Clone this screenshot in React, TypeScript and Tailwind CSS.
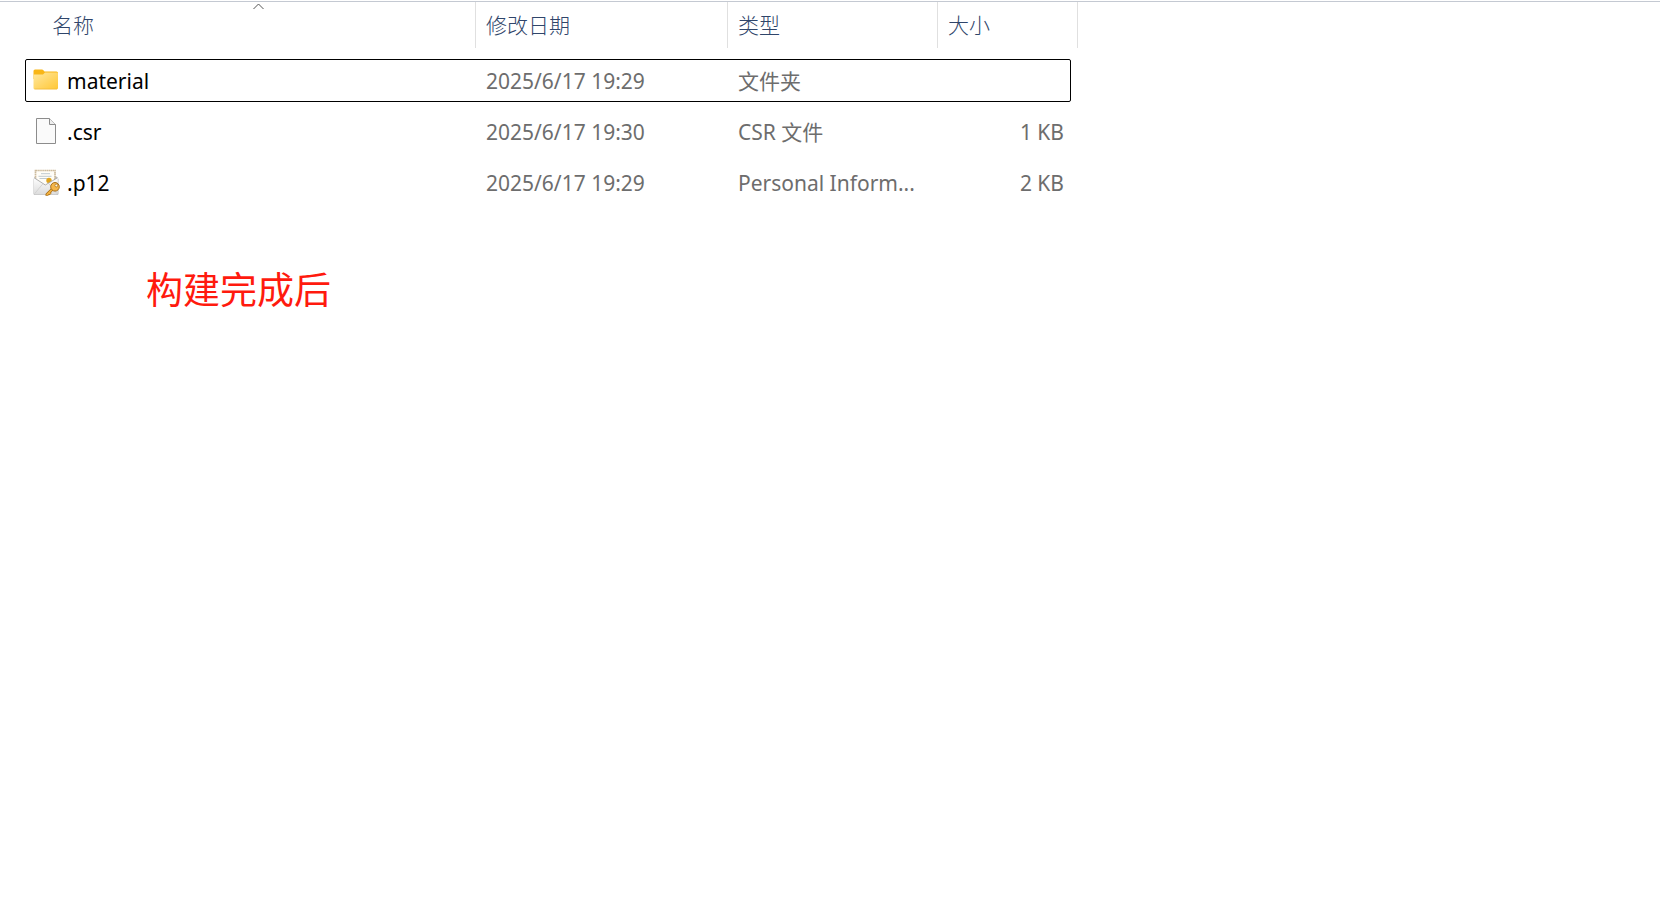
import React from 'react';

type FileRow = {
  name: string;
  modified: string;
  type: string;
  size: string;
  icon: React.ReactNode;
  focused?: boolean;
};

function FolderIcon() {
  return (
    <svg width="26" height="26" viewBox="0 0 26 26" aria-hidden="true">
      <defs>
        <linearGradient id="folder" x1="0" y1="0" x2="1" y2="1">
          <stop offset="0" stopColor="#ffe8a0" />
          <stop offset="1" stopColor="#ffc735" />
        </linearGradient>
      </defs>
      <path d="M.5 4q0-1.500 1.500-1.500h7q.8 0 1.400.8l1.100 1.200h12q1.500 0 1.500 1.500v6H.5z" fill="#f8b617" />
      <path d="M.5 7.500H10l2-2h12q1 0 1 1v14.500q0 1.200-1.200 1.200H1.700Q.5 22.200.5 21z" fill="url(#folder)" />
      <path d="M1.500 22h22.500" stroke="#efb73a" strokeWidth="0.700" />
    </svg>
  );
}

function BlankFileIcon() {
  return (
    <svg width="26" height="28" viewBox="0 0 26 28" aria-hidden="true">
      <path d="M3.500.5h13l6 6v19h-19z" fill="#fafafa" stroke="#8c8c8c" />
      <path d="M16.500.5v6h6" fill="#eeeeee" stroke="#8c8c8c" />
    </svg>
  );
}

function CertificateIcon() {
  return (
    <svg width="28" height="28" viewBox="0 0 28 28" aria-hidden="true">
      <defs>
        <linearGradient id="envelope" x1="0" y1="0" x2="0" y2="1">
          <stop offset="0" stopColor="#ffffff" />
          <stop offset="1" stopColor="#dcdcdc" />
        </linearGradient>
      </defs>
      <path d="M.5 10L3 7h20l2.500 3v14.500q0 1.500-1.500 1.500H2Q.5 26 .5 24.500z" fill="#bdbdbd" />
      <path d="M2.500 1.500h19.500v16H2.500z" fill="#fffdf7" stroke="#cdbb9d" strokeWidth="1.700" strokeDasharray="1.500 .4" />
      <path d="M8 4.700h9M5.500 7.300h13M6.500 9.500h8" stroke="#b9c3cc" strokeWidth="0.900" />
      <circle cx="16" cy="11.500" r="2.700" fill="#dfa41f" />
      <path d="M.8 8.500L12.300 16 24.800 8.500V24q0 1.400-1.400 1.400H2.200Q.8 25.400.8 24z" fill="url(#envelope)" />
      <path d="M1.500 24.800l8.200-9.800M24 24.800l-8.300-10.300" stroke="#d0d0d0" strokeWidth="0.900" />
      <path d="M1 8.700l11.300 7.300L24.600 8.700" fill="none" stroke="#a6a6a6" strokeWidth="0.900" />
      <path d="M20 19.500l-6.300 6.300M16 23.500l1.600 1.600M14 25v1.700" stroke="#a36a12" strokeWidth="3" />
      <path d="M20 19.500l-6.300 6.300M16 23.500l1.300 1.300" stroke="#f3b13e" strokeWidth="1.700" />
      <circle cx="22" cy="17.800" r="4.300" fill="#f5b649" stroke="#a8701a" strokeWidth="1" />
      <circle cx="23.300" cy="16.500" r="1.400" fill="#fff4da" stroke="#a36a12" strokeWidth="0.700" />
    </svg>
  );
}

const files: FileRow[] = [
  { name: 'material', modified: '2025/6/17 19:29', type: '文件夹', size: '', icon: <FolderIcon />, focused: true },
  { name: '.csr', modified: '2025/6/17 19:30', type: 'CSR 文件', size: '1 KB', icon: <BlankFileIcon /> },
  { name: '.p12', modified: '2025/6/17 19:29', type: 'Personal Inform...', size: '2 KB', icon: <CertificateIcon /> },
];

export default function App() {
  const headBase = 'flex h-[46px] items-center border-r border-[#e0e0e0] pl-[10px] leading-6';

  return (
    <main className="min-h-screen bg-white pt-px font-['Noto_Sans','Noto_Sans_CJK_SC',sans-serif] text-[21px] leading-6 text-[#6d6d6d]">
      <div className="border-t border-[#c4c9d2]">
        <table className="w-[1078px] table-fixed border-collapse">
          <colgroup>
            <col className="w-[476px]" />
            <col className="w-[252px]" />
            <col className="w-[210px]" />
            <col className="w-[140px]" />
          </colgroup>
          <thead className="text-left text-[#2f456a]">
            <tr className="h-[53px] align-top">
              <th className="relative p-0 font-light" aria-sort="ascending">
                <div className="flex h-[46px] items-center border-r border-[#e0e0e0] pl-[52px] leading-6">名称</div>
                <svg
                  className="absolute left-[253px] top-px"
                  width="11"
                  height="7"
                  viewBox="0 0 11 7"
                  fill="none"
                  stroke="#555"
                  aria-hidden="true"
                >
                  <path d="M.5 6l5-5 5 5" />
                </svg>
              </th>
              <th className="p-0 font-light">
                <div className={headBase}>修改日期</div>
              </th>
              <th className="p-0 font-light">
                <div className={headBase}>类型</div>
              </th>
              <th className="p-0 font-light">
                <div className={headBase}>大小</div>
              </th>
            </tr>
          </thead>
          <tbody>
            {files.map((file) => (
              <tr key={file.name} className="relative h-[51px]">
                <td className="p-0 text-black">
                  {file.focused && (
                    <span className="pointer-events-none absolute inset-y-1 left-[25px] right-[7px] rounded-xs border border-black" />
                  )}
                  <div className="flex items-center pl-[33px]">
                    <span className="flex h-7 w-[34px] shrink-0 items-start">{file.icon}</span>
                    {file.name}
                  </div>
                </td>
                <td className="p-0 pl-[10px]">{file.modified}</td>
                <td className="p-0 pl-[10px] whitespace-nowrap">{file.type}</td>
                <td className="p-0 pr-[14px] text-right">{file.size}</td>
              </tr>
            ))}
          </tbody>
        </table>
      </div>
      <p className="ml-[146px] mt-[58px] text-[37px] leading-[48px] text-[#ff1a0e]">构建完成后</p>
    </main>
  );
}
